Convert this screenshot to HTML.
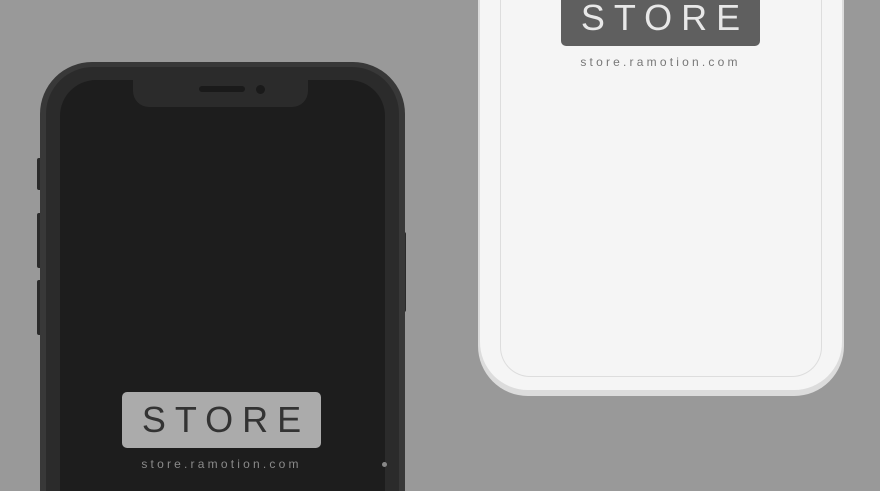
<!DOCTYPE html>
<html><head><meta charset="utf-8"><style>
*{margin:0;padding:0;box-sizing:border-box}
html,body{width:880px;height:491px;overflow:hidden}
body{background:#999;position:relative;font-family:"Liberation Sans",sans-serif}
.a{position:absolute}
.badge{display:flex;align-items:center;justify-content:center;font-weight:300;letter-spacing:9px;padding-left:9px}
.sub{font-size:12px;letter-spacing:3.2px;text-align:center}
</style></head><body>
<div class="a" style="left:37px;top:158px;width:5px;height:32px;background:#2a2a2a;border-radius:2px"></div>
<div class="a" style="left:37px;top:213px;width:5px;height:55px;background:#2a2a2a;border-radius:2px"></div>
<div class="a" style="left:37px;top:280px;width:5px;height:55px;background:#2a2a2a;border-radius:2px"></div>
<div class="a" style="left:402px;top:232px;width:4px;height:80px;background:#2a2a2a;border-radius:2px"></div>
<div class="a" style="left:40px;top:62px;width:365px;height:429px;background:#383838;border-radius:52px 52px 0 0"></div>
<div class="a" style="left:46px;top:67px;width:353px;height:424px;background:#2b2b2b;border-radius:47px 47px 0 0"></div>
<div class="a" style="left:60px;top:80px;width:325px;height:411px;background:#1d1d1d;border-radius:36px 36px 0 0"></div>
<div class="a" style="left:133px;top:78px;width:175px;height:29px;background:#2b2b2b;border-radius:0 0 16px 16px"></div>
<div class="a" style="left:199px;top:86px;width:46px;height:6px;background:#1a1a1a;border-radius:3px"></div>
<div class="a" style="left:256px;top:85px;width:9px;height:9px;background:#1a1a1a;border-radius:50%"></div>
<div class="a badge" style="left:122px;top:392px;width:199px;height:56px;background:#ababab;border-radius:5px;color:#333;font-size:36px">STORE</div>
<div class="a sub" style="left:122px;top:457px;width:199px;color:#8a8a8a">store.ramotion.com</div>
<div class="a" style="left:382px;top:462px;width:5px;height:5px;background:#888;border-radius:50%"></div>
<div class="a" style="left:478px;top:0;width:366px;height:396px;background:#dcdcdc;border-radius:0 0 50px 50px"></div>
<div class="a" style="left:480px;top:0;width:362px;height:390px;background:#f5f5f5;border-radius:0 0 48px 48px"></div>
<div class="a" style="left:500px;top:0;width:322px;height:377px;border:1px solid #ddd;border-top:none;background:#f5f5f5;border-radius:0 0 30px 30px"></div>
<div class="a badge" style="left:561px;top:0;width:199px;height:46px;background:#5f5f5f;border-radius:0 0 5px 5px;color:#e8e8e8;font-size:36px;padding-bottom:10px">STORE</div>
<div class="a sub" style="left:561px;top:55px;width:199px;color:#777">store.ramotion.com</div>
</body></html>
